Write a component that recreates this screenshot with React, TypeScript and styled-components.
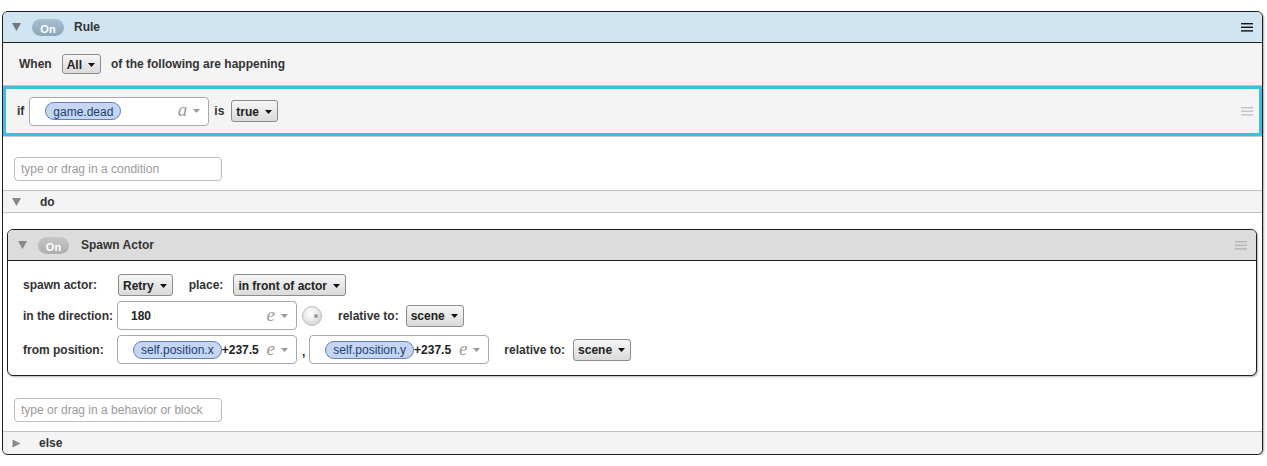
import React from "react";
import styled, { createGlobalStyle } from "styled-components";

const Global = createGlobalStyle`
  html, body { margin: 0; padding: 0; background: #fff; }
  body {
    font-family: "Liberation Sans", Arial, Helvetica, sans-serif;
    font-size: 12px;
    color: #333;
  }
  #root { padding: 11px 4px 0 2px; }
  *, *::before, *::after { box-sizing: border-box; }
`;

const RulePanel = styled.div`
  border: 1px solid #1e1e1e;
  border-radius: 6px;
  overflow: hidden;
  background: #fff;
  box-shadow: 1px 1px 2px rgba(0, 0, 0, 0.35);
`;

const RuleHeader = styled.div`
  display: flex;
  align-items: center;
  height: 31px;
  padding: 0 9px 0 9px;
  background: #cfe5f1;
  border-bottom: 1px solid #1e1e1e;
`;

const Title = styled.span<{ $ml: number }>`
  font-weight: bold;
  color: #333;
  margin-left: ${(p) => p.$ml}px;
  flex: 1;
`;

const Toggle = styled.span<{ $kind: "rule" | "block"; $ml: number; $w: number }>`
  display: inline-flex;
  align-items: center;
  justify-content: center;
  width: ${(p) => p.$w}px;
  height: 17px;
  margin-top: 1px;
  margin-left: ${(p) => p.$ml}px;
  border-radius: 9px;
  font-size: 11px;
  font-weight: bold;
  color: #fff;
  padding-top: 2px;
  background: ${(p) =>
    p.$kind === "rule"
      ? "linear-gradient(#a9bfd0, #8ba6ba)"
      : "linear-gradient(#c6c6c6, #aeaeae)"};
`;

const WhenRow = styled.div`
  display: flex;
  align-items: center;
  height: 43px;
  padding-left: 16px;
  background: #f4f4f4;
  border-bottom: 1px solid #c2c2c2;
`;

const Label = styled.span<{ $ml?: number; $w?: number }>`
  font-weight: bold;
  color: #333;
  white-space: nowrap;
  margin-left: ${(p) => p.$ml ?? 0}px;
  ${(p) => (p.$w ? `width: ${p.$w}px; flex: none;` : "")}
`;

const Dropdown = styled.span<{ $h: number; $ml: number }>`
  display: inline-flex;
  align-items: center;
  gap: 6px;
  height: ${(p) => p.$h}px;
  margin-left: ${(p) => p.$ml}px;
  padding: 1px 5px 0 4px;
  border: 1px solid #8c8c8c;
  border-radius: 3px;
  background: linear-gradient(#f6f6f6, #dadada);
  font-weight: bold;
  color: #222;
  white-space: nowrap;
`;

const ConditionList = styled.div`
  border-bottom: 1px solid #c8c8c8;
`;

const ConditionItem = styled.div`
  display: flex;
  align-items: center;
  height: 50px;
  padding: 0 6px 0 11px;
  background: #f4f4f4;
  border: 3px solid #3dbeea;
`;

const ExprField = styled.div<{ $ml: number }>`
  display: flex;
  align-items: center;
  width: 180px;
  height: 29px;
  flex: none;
  margin-left: ${(p) => p.$ml}px;
  padding: 0 8px 0 13px;
  background: #fff;
  border: 1px solid #a9a9a9;
  border-radius: 4px;
`;

const ExprContent = styled.div`
  flex: 1;
  display: flex;
  align-items: center;
  font-weight: bold;
  color: #222;
  white-space: nowrap;
`;

const VarPill = styled.span`
  display: inline-flex;
  align-items: center;
  height: 18px;
  margin-left: 2px;
  padding: 1px 7px 0 7px;
  border: 1px solid #6181c0;
  border-radius: 9px;
  background: #c6d5f2;
  color: #213f74;
  font-weight: normal;
`;

const TypeGlyph = styled.span`
  font-family: "Liberation Serif", "Times New Roman", serif;
  font-style: italic;
  font-size: 19px;
  line-height: 1;
  color: #9a9a9a;
  margin-right: 6px;
  margin-top: -3px;
`;

const Spacer = styled.div`
  flex: 1;
`;

const DropZone = styled.div<{ $pt: number }>`
  padding: ${(p) => p.$pt}px 0 9px 11px;
  border-bottom: 1px solid #c2c2c2;
`;

const DropInput = styled.div`
  display: flex;
  align-items: center;
  width: 208px;
  height: 24px;
  padding-left: 6px;
  border: 1px solid #bdbdbd;
  border-radius: 4px;
  background: #fff;
  color: #9a9a9a;
`;

const SectionBar = styled.div<{ $h: number; $border: boolean }>`
  display: flex;
  align-items: center;
  height: ${(p) => p.$h}px;
  padding-left: 9px;
  background: #f4f4f4;
  ${(p) => (p.$border ? "border-bottom: 1px solid #c2c2c2;" : "")}
`;

const BlockSlot = styled.div`
  padding: 16px 5px 0 4px;
`;

const BlockPanel = styled.div`
  border: 1px solid #1e1e1e;
  border-radius: 6px;
  overflow: hidden;
  background: #fff;
  box-shadow: 1px 1px 2px rgba(0, 0, 0, 0.3);
`;

const BlockHeader = styled.div`
  display: flex;
  align-items: center;
  height: 31px;
  padding: 0 9px 0 10px;
  background: #dcdcdc;
  border-bottom: 1px solid #1e1e1e;
`;

const BlockBody = styled.div`
  display: flex;
  flex-direction: column;
  gap: 5px;
  padding: 13px 15px 11px 15px;
`;

const FieldRow = styled.div<{ $h: number }>`
  display: flex;
  align-items: center;
  height: ${(p) => p.$h}px;
`;

const Knob = styled.span`
  position: relative;
  flex: none;
  width: 20px;
  height: 20px;
  margin-left: 5px;
  border-radius: 50%;
  border: 1px solid #bdbdbd;
  background: radial-gradient(circle at 42% 35%, #ffffff 0%, #ececec 40%, #c4c4c4 100%);
  &::after {
    content: "";
    position: absolute;
    right: 3px;
    top: 7px;
    width: 4px;
    height: 4px;
    border-radius: 50%;
    background: #9c9c9c;
  }
`;

const Comma = styled.span`
  font-weight: bold;
  margin: 4px 4px 0 5px;
`;

const TriangleDown = ({ color = "#777" }: { color?: string }) => (
  <svg width="9" height="8" viewBox="0 0 9 8" style={{ flex: "none" }}>
    <polygon points="0,0 9,0 4.5,8" fill={color} />
  </svg>
);

const TriangleRight = ({ color = "#888" }: { color?: string }) => (
  <svg width="9" height="9" viewBox="0 0 9 9" style={{ flex: "none" }}>
    <polygon points="0.5,0.5 8.5,4.5 0.5,8.5" fill={color} />
  </svg>
);

const Caret = ({ color = "#111" }: { color?: string }) => (
  <svg width="7" height="4" viewBox="0 0 7 4" style={{ flex: "none" }}>
    <polygon points="0,0 7,0 3.5,4" fill={color} />
  </svg>
);

const Hamburger = ({ color }: { color: string }) => (
  <svg width="12" height="9" viewBox="0 0 12 9" style={{ flex: "none" }}>
    <rect x="0" y="0" width="12" height="1.4" fill={color} />
    <rect x="0" y="3.6" width="12" height="1.4" fill={color} />
    <rect x="0" y="7.2" width="12" height="1.4" fill={color} />
  </svg>
);

const Select = ({ label, h, ml }: { label: string; h: number; ml: number }) => (
  <Dropdown $h={h} $ml={ml}>
    {label}
    <Caret />
  </Dropdown>
);

const Expr = ({
  children,
  glyph,
  ml,
}: {
  children: React.ReactNode;
  glyph: string;
  ml: number;
}) => (
  <ExprField $ml={ml}>
    <ExprContent>{children}</ExprContent>
    <TypeGlyph>{glyph}</TypeGlyph>
    <Caret color="#9a9a9a" />
  </ExprField>
);

export default function App() {
  return (
    <>
      <Global />
      <RulePanel>
        <RuleHeader>
          <TriangleDown color="#777" />
          <Toggle $kind="rule" $ml={11} $w={32}>
            On
          </Toggle>
          <Title $ml={10}>Rule</Title>
          <Hamburger color="#111" />
        </RuleHeader>

        <WhenRow>
          <Label>When</Label>
          <Select label="All" h={20} ml={10} />
          <Label $ml={10}>of the following are happening</Label>
        </WhenRow>

        <ConditionList>
          <ConditionItem>
            <Label>if</Label>
            <Expr glyph="a" ml={5}>
              <VarPill>game.dead</VarPill>
            </Expr>
            <Label $ml={5}>is</Label>
            <Select label="true" h={22} ml={7} />
            <Spacer />
            <Hamburger color="#c2c2c2" />
          </ConditionItem>
        </ConditionList>

        <DropZone $pt={20}>
          <DropInput>type or drag in a condition</DropInput>
        </DropZone>

        <SectionBar $h={22} $border>
          <TriangleDown color="#888" />
          <Label $ml={19}>do</Label>
        </SectionBar>

        <BlockSlot>
          <BlockPanel>
            <BlockHeader>
              <TriangleDown color="#888" />
              <Toggle $kind="block" $ml={11} $w={31}>
                On
              </Toggle>
              <Title $ml={12}>Spawn Actor</Title>
              <Hamburger color="#b4b4b4" />
            </BlockHeader>
            <BlockBody>
              <FieldRow $h={22}>
                <Label $w={95}>spawn actor:</Label>
                <Select label="Retry" h={22} ml={0} />
                <Label $ml={16}>place:</Label>
                <Select label="in front of actor" h={22} ml={10} />
              </FieldRow>
              <FieldRow $h={29}>
                <Label $w={94}>in the direction:</Label>
                <Expr glyph="e" ml={0}>
                  180
                </Expr>
                <Knob />
                <Label $ml={16}>relative to:</Label>
                <Select label="scene" h={22} ml={7} />
              </FieldRow>
              <FieldRow $h={29}>
                <Label $w={94}>from position:</Label>
                <Expr glyph="e" ml={0}>
                  <VarPill>self.position.x</VarPill>+237.5
                </Expr>
                <Comma>,</Comma>
                <Expr glyph="e" ml={0}>
                  <VarPill>self.position.y</VarPill>+237.5
                </Expr>
                <Label $ml={15}>relative to:</Label>
                <Select label="scene" h={22} ml={8} />
              </FieldRow>
            </BlockBody>
          </BlockPanel>
        </BlockSlot>

        <DropZone $pt={22}>
          <DropInput>type or drag in a behavior or block</DropInput>
        </DropZone>

        <SectionBar $h={22} $border={false}>
          <TriangleRight color="#888" />
          <Label $ml={18}>else</Label>
        </SectionBar>
      </RulePanel>
    </>
  );
}
